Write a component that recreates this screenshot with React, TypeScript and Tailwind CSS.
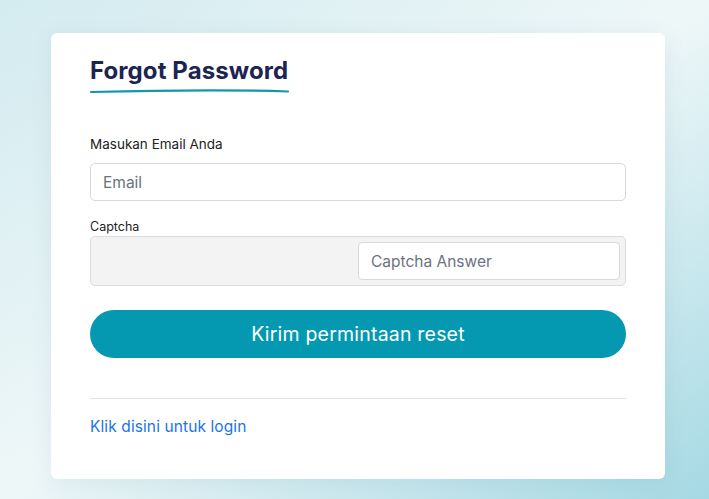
import React from 'react';

const App: React.FC = () => {
  return (
    <div
      className="h-screen overflow-hidden w-full bg-gradient-to-br from-[#d3ebf0] via-[#eef7f8] to-[#a5d9e4] pt-[33px] pl-[51px] pr-[44px]"
      style={{ fontFamily: 'Inter, "Noto Sans", sans-serif' }}
    >
      <div className="bg-white rounded-md shadow-[0_4px_24px_rgba(0,80,100,0.08)] px-[39px] pt-[23px] pb-[40px]">
        {/* Heading */}
        <div className="inline-block">
          <h1 className="text-[24px] leading-[30px] font-bold text-[#1c2452] tracking-[0.1px]">Forgot Password</h1>
          <svg width="199" height="6" viewBox="0 0 199 6" className="mt-[2px] block">
            <path d="M1 4 C 60 2.5, 140 1.5, 198 3.5" stroke="#1496ad" strokeWidth="2.2" fill="none" strokeLinecap="round" />
          </svg>
        </div>

        {/* Email */}
        <div className="mt-[40px]">
          <label className="block text-[13.5px] text-[#222] mb-[9px]">Masukan Email Anda</label>
          <input
            type="text"
            placeholder="Email"
            className="w-full h-[38px] border border-[#d9d9d9] rounded-[5px] px-[12px] text-[15.5px] placeholder:text-[#6b7280] outline-none"
          />
        </div>

        {/* Captcha */}
        <div className="mt-[18px]">
          <label className="block text-[12.5px] leading-[16px] text-[#222] mb-[1px]">Captcha</label>
          <div className="grid grid-cols-[1fr_262px] h-[50px] bg-[#f3f3f3] border border-[#dcdcdc] rounded-[5px] py-[5px] pr-[5px]">
            <div />
            <input
              type="text"
              placeholder="Captcha Answer"
              className="h-[38px] w-full bg-white border border-[#d9d9d9] rounded-[4px] px-[12px] text-[15.5px] placeholder:text-[#6b7280] outline-none"
            />
          </div>
        </div>

        {/* Submit */}
        <button className="mt-[24px] w-full h-[48px] rounded-full bg-[#0499b1] text-white text-[19.5px] tracking-[0.2px]">
          Kirim permintaan reset
        </button>

        <div className="mt-[40px] border-t border-[#e5e5e5]" />

        <a href="#" className="block mt-[16px] text-[15.5px] text-[#1a73e8] tracking-[0.1px]">
          Klik disini untuk login
        </a>
      </div>
    </div>
  );
};

export default App;
